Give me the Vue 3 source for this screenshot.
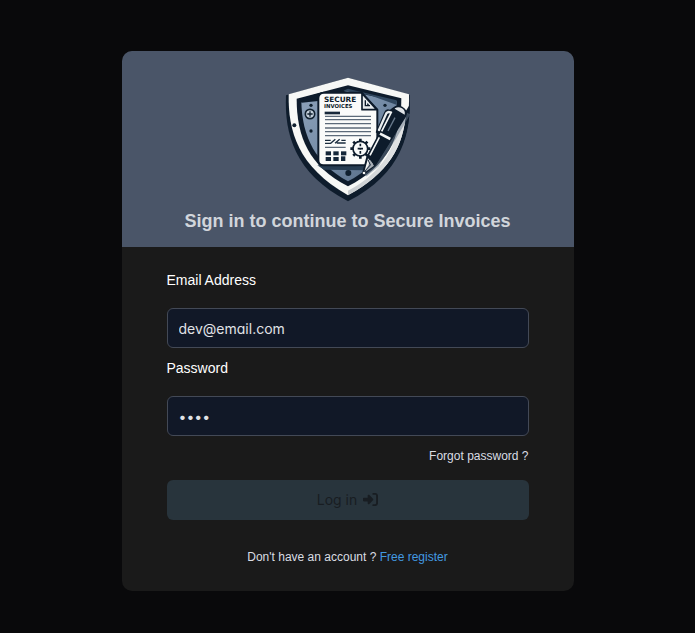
<script setup>
import { ref } from 'vue'

const email = ref('dev@email.com')
const password = ref('1234')
const lines = [139, 149, 161, 174, 185, 197]
const cells = [
  [137, 244], [160, 244], [183, 244],
  [137, 261], [160, 261],
]
const teeth = [0, 45, 90, 135, 180, 225, 270, 315]
</script>

<template>
  <main class="page">
    <section class="card">
      <header class="head">
        <svg class="logo" viewBox="12 15 384 384" role="img" aria-label="Secure Invoices">
          <defs>
            <linearGradient id="steel" x1="0" y1="0" x2="1" y2="1">
              <stop offset="0" stop-color="#8da2ba" />
              <stop offset="0.5" stop-color="#748ba6" />
              <stop offset="1" stop-color="#52677f" />
            </linearGradient>
            <linearGradient id="rim" x1="0" y1="0" x2="1" y2="0">
              <stop offset="0" stop-color="#c8cccf" />
              <stop offset="1" stop-color="#e4e6e7" />
            </linearGradient>
          </defs>
          <path fill="#0e1c2c" d="M204 23 L389 75 C394 190 367 310 204 394 C42 310 13 190 18 76 Z" />
          <path fill="#f7f8f6" d="M204 23 L387 73 C390 178 360 292 204 376 C53 291 24 182 26 73 Z" />
          <path fill="#0e1c2c" d="M378 122 L389 104 C388 205 354 310 204 388 L204 376 C325 310 372 230 378 122 Z" />
          <path fill="url(#rim)" d="M378 125 C372 230 325 310 204 376 L204 362 C310 306 352 228 363 125 Z" />
          <path fill="#0e1c2c" d="M204 46 L364 85 C364 205 321 289 204 349 C88 289 50 202 50 86 Z" />
          <path fill="url(#steel)" d="M204 63 L350 94 C348 202 304 282 204 334 C107 282 67 202 64 97 Z" />
          <path fill="#0e1c2c" d="M58 87 L130 66 L122 92 L65 98 Z" />
          <path fill="#314860" d="M190 62 L204 56 L222 61 L350 91 L349 104 L270 76 Z" />
          <path fill="#263c52" d="M112 286 L260 289 L253 301 L132 299 Z" />
          <g fill="#10202f">
            <circle cx="43" cy="166" r="6" />
            <circle cx="93" cy="106" r="5" />
            <circle cx="93" cy="183" r="5" />
            <circle cx="315" cy="106" r="5" />
            <circle cx="205" cy="309" r="9" />
          </g>
          <circle cx="90" cy="132" r="14" fill="#c4d0dc" stroke="#10202f" stroke-width="5" />
          <path d="M90 124 V140 M82 132 H98" stroke="#10202f" stroke-width="4" />
          <path fill="#fafbfa" stroke="#0c1a2a" stroke-width="6" stroke-linejoin="round" d="M132 68 H245 L292 119 V275 Q292 286 280 286 H130 Q115 286 115 270 V85 Q115 68 132 68 Z" />
          <path fill="#e8ecef" stroke="#0c1a2a" stroke-width="5" stroke-linejoin="round" d="M246 70 V119 H290 Z" />
          <path d="M256 91 V107 H270 M262 101 L266 107" fill="none" stroke="#0c1a2a" stroke-width="4" />
          <text class="mark" x="132" y="96" font-size="22">SECURE</text>
          <text class="mark" x="132" y="115" font-size="16">INVOICES</text>
          <rect x="134" y="125" width="46" height="8" fill="#17283a" />
          <path v-for="y in lines" :key="y" :d="`M135 ${y} H273`" stroke="#5c6a79" stroke-width="4" />
          <path d="M135 211 H152 M135 220 H152 L166 208 M165 220 L179 208 M170 219 H197 M184 211 H197" fill="none" stroke="#1a2c3e" stroke-width="4" />
          <path d="M135 232 H197" stroke="#5c6a79" stroke-width="4" />
          <rect v-for="([x, y], i) in cells" :key="i" :x="x" :y="y" width="16" height="12" fill="#15273a" />
          <rect x="183" y="259" width="13" height="14" fill="#15273a" />
          <g stroke="#0e1c2c" stroke-width="8">
            <path v-for="a in teeth" :key="a" d="M241 206 V217" :transform="`rotate(${a} 241 236)`" />
          </g>
          <circle cx="241" cy="236" r="22" fill="#fafbfa" stroke="#0e1c2c" stroke-width="5" />
          <path d="M241 221 V229 M241 233 V239 M241 243 V251 M233 236 H249" stroke="#0e1c2c" stroke-width="5" />
          <path d="M386 131 L344 203 L292 286 L256 316" fill="none" stroke="#68788a" stroke-width="10" opacity="0.5" />
          <path fill="#0d1b2b" d="M340 112 Q350 102 367 110 Q386 120 378 140 L334 211 L286 288 L251 315 L247 307 L259 260 L295 193 L287 187 L313 126 Q317 115 330 119 Z" />
          <path fill="#e0e4e7" d="M345 115 Q355 108 366 115 Q377 122 374 134 L344 116 Z" />
          <path d="M297 180 L319 130 Q324 124 331 127" fill="none" stroke="#e9edef" stroke-width="7" stroke-linecap="round" />
          <path d="M335 125 L305 184 M298 202 L270 256" stroke="#f3f5f5" stroke-width="5" />
          <path d="M324 183 L345 143" stroke="#68798c" stroke-width="4" />
          <path d="M300 191 L331 207" stroke="#f4f6f6" stroke-width="8" />
          <path fill="#f4f5f4" d="M264 265 L279 283 L253 306 Z" />
          <path fill="#a8afb6" d="M271 270 L282 287 L257 305 Z" />
          <path d="M264 269 L271 285 L252 306" fill="none" stroke="#132235" stroke-width="3" />
          <circle cx="252" cy="309" r="4" fill="#f7f8f6" />
        </svg>
        <h1 class="title">Sign in to continue to Secure Invoices</h1>
      </header>

      <form class="form" @submit.prevent>
        <label class="label" for="email">Email Address</label>
        <input id="email" v-model="email" class="field" type="email" autocomplete="email" />
        <label class="label" for="password">Password</label>
        <input id="password" v-model="password" class="field" type="password" autocomplete="current-password" />
        <a class="forgot" href="#forgot">Forgot password ?</a>
        <button class="submit" type="submit" disabled>
          Log in
          <svg class="icon" viewBox="0 0 512 512" aria-hidden="true">
            <path fill="currentColor" d="M217.900 105.900L340.700 228.700c7.200 7.200 11.300 17.100 11.300 27.300s-4.100 20.100-11.300 27.300L217.900 406.100c-6.400 6.400-15 9.900-24 9.900c-18.700 0-33.900-15.200-33.900-33.900l0-62.100L32 320c-17.700 0-32-14.300-32-32l0-64c0-17.700 14.300-32 32-32l128 0 0-62.100c0-18.700 15.200-33.900 33.900-33.900c9 0 17.600 3.600 24 9.900zM352 416l64 0c17.700 0 32-14.300 32-32l0-256c0-17.700-14.300-32-32-32l-64 0c-17.700 0-32-14.300-32-32s14.300-32 32-32l64 0c53 0 96 43 96 96l0 256c0 53-43 96-96 96l-64 0c-17.700 0-32-14.300-32-32s14.300-32 32-32z" />
          </svg>
        </button>
        <p class="register">Don't have an account ? <a href="#register">Free register</a></p>
      </form>
    </section>
  </main>
</template>

<style>
body {
  background: #09090b;
}
</style>

<style scoped>
.page {
  box-sizing: border-box;
  min-height: 100vh;
  display: flex;
  flex-direction: column;
  align-items: center;
  justify-content: center;
  padding-top: 8px;
  font-family: "Liberation Sans", Arial, sans-serif;
}
.card {
  width: 100%;
  max-width: 452px;
  border-radius: 10px;
  overflow: hidden;
  background: #1a1a1a;
}
.head {
  display: flex;
  flex-direction: column;
  align-items: center;
  gap: 4px;
  padding: 24px 16px 12px;
  background: #4a5568;
}
.logo {
  width: 128px;
  height: 128px;
}
.mark {
  font-family: "DejaVu Sans", sans-serif;
  font-weight: 700;
  fill: #0c1a2a;
}
.title {
  margin: 0;
  font-size: 18px;
  line-height: 28px;
  font-weight: 700;
  color: #d1d5db;
  text-align: center;
}
.form {
  display: flex;
  flex-direction: column;
  padding: 20px 45px 24px;
}
.label {
  padding: 3px 0 18px;
  font-size: 14px;
  line-height: 20px;
  color: #fff;
}
.field {
  box-sizing: border-box;
  width: 100%;
  height: 40px;
  margin: 0 0 7px;
  padding: 2px 11px 0;
  border: 1px solid #434956;
  border-radius: 6px;
  outline: 0;
  background: #111827;
  color: #e0e2e6;
  font-family: Inter, sans-serif;
  font-size: 14px;
  font-feature-settings: "cv11";
}
.forgot {
  align-self: flex-end;
  margin: 3px 0 14px;
  font-size: 12px;
  line-height: 20px;
  color: #d9dde3;
  text-decoration: none;
}
.submit {
  display: flex;
  align-items: center;
  justify-content: center;
  gap: 6px;
  height: 40px;
  padding: 0;
  border: 0;
  border-radius: 6px;
  background: #28343c;
  color: #181d22;
  font-family: Inter, sans-serif;
  font-size: 14px;
}
.icon {
  width: 15px;
  height: 15px;
}
.register {
  margin: 27px 0 0;
  font-size: 12px;
  line-height: 20px;
  color: #d9dde3;
  text-align: center;
}
.register a {
  color: #4299e1;
  text-decoration: none;
}
</style>
